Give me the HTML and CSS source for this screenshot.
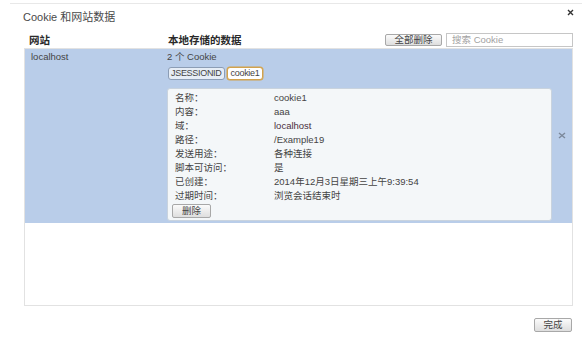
FILE: index.html
```html
<!DOCTYPE html>
<html lang="zh-CN">
<head>
    <meta charset="UTF-8">
    <meta name="viewport" content="width=device-width, initial-scale=1.0">
    <title>Cookie 和网站数据</title>
    <link rel="stylesheet" href="styles.css">
</head>
<body>
    <div class="dialog">
        <div class="title-row">
            <span class="title">Cookie 和网站数据</span>
            <span class="close">
                <svg width="7" height="7" viewBox="0 0 7 7"><path d="M1 1L6 6M6 1L1 6" stroke="#333" stroke-width="1.4"/></svg>
            </span>
        </div>
        <div class="toolbar">
            <div class="head-site">网站</div>
            <div class="head-data">本地存储的数据</div>
            <button class="btn btn-wide">全部删除</button>
            <input class="search" type="text" placeholder="搜索 Cookie">
        </div>
        <div class="list">
            <div class="row selected">
                <div class="site">localhost</div>
                <div class="data">
                    <div class="count">2 个 Cookie</div>
                    <div class="chips">
                        <span class="chip">JSESSIONID</span>
                        <span class="chip active">cookie1</span>
                    </div>
                    <div class="details">
                        <div class="field"><span class="label">名称：</span><span class="value">cookie1</span></div>
                        <div class="field"><span class="label">内容：</span><span class="value">aaa</span></div>
                        <div class="field"><span class="label">域：</span><span class="value domain">localhost</span></div>
                        <div class="field"><span class="label">路径：</span><span class="value">/Example19</span></div>
                        <div class="field"><span class="label">发送用途：</span><span class="value">各种连接</span></div>
                        <div class="field"><span class="label">脚本可访问：</span><span class="value">是</span></div>
                        <div class="field"><span class="label">已创建：</span><span class="value">2014年12月3日星期三上午9:39:54</span></div>
                        <div class="field"><span class="label">过期时间：</span><span class="value">浏览会话结束时</span></div>
                        <button class="btn btn-small">删除</button>
                    </div>
                </div>
                <div class="remove">
                    <svg width="8" height="7" viewBox="0 0 8 7"><path d="M1 1L7 6M7 1L1 6" stroke="#7b889a" stroke-width="1.4"/></svg>
                </div>
            </div>
        </div>
        <div class="footer">
            <button class="btn btn-done">完成</button>
        </div>
    </div>
</body>
</html>
```

FILE: styles.css
```css
/* Cookie dialog */
* {
    margin: 0;
    padding: 0;
    box-sizing: border-box;
}
body {
    background: #fff;
    font-family: "Liberation Sans", "Noto Sans CJK SC", sans-serif;
    font-size: 9.5px;
    color: #444;
}
.dialog {
    margin: 3px 0 0 10px;
    border-top: 1px solid #e8e8e8;
    padding: 0 9px 0 14px;
}
.title-row {
    height: 24px;
    display: flex;
    align-items: center;
    justify-content: space-between;
}
.title {
    font-size: 11px;
    color: #4a4a4a;
    margin-left: -1px;
}
.close {
    display: flex;
    margin-top: -8px;
    margin-right: -1px;
}
.toolbar {
    margin-top: 4px;
    height: 15px;
    display: flex;
    align-items: center;
    gap: 4px;
}
.head-site,
.head-data {
    font-size: 10.5px;
    font-weight: bold;
    color: #2a2a2a;
}
.head-site {
    width: 140px;
    padding-left: 5px;
}
.head-data {
    flex: 1;
}
.btn {
    height: 14px;
    background: linear-gradient(#fbfbfb, #dedede);
    border: 1px solid #a8a8a8;
    border-radius: 2px;
    font-family: "Liberation Sans", "Noto Sans CJK SC", sans-serif;
    font-size: 9.5px;
    color: #444;
    line-height: 12px;
}
.btn-wide {
    width: 57px;
    height: 12px;
    line-height: 10px;
}
.search {
    width: 127px;
    height: 14px;
    border: 1px solid #c6c6c6;
    padding: 0 5px;
    font-family: "Liberation Sans", "Noto Sans CJK SC", sans-serif;
    font-size: 9.5px;
    outline: none;
}
.search::placeholder {
    color: #a2a2a2;
}
.list {
    margin-top: 1px;
    height: 258px;
    border: 1px solid #e2e2e2;
}
.row {
    display: flex;
    padding: 1px 0 2px;
}
.row.selected {
    background: #b9cde9;
}
.site {
    width: 142px;
    padding-left: 6px;
    line-height: 14px;
}
.data {
    width: 385px;
}
.count {
    line-height: 14px;
}
.chips {
    margin-top: 3px;
    padding-left: 1px;
    display: flex;
    gap: 2px;
}
.chip {
    height: 13px;
    line-height: 11px;
    padding: 0 2px;
    font-size: 9px;
    letter-spacing: -0.3px;
    border: 1px solid #8c9db5;
    border-radius: 3px;
    background: #e6edf6;
}
.chip.active {
    background: #fff;
    border: 1px solid #d2a24c;
    box-shadow: 0 0 0 0.5px #d2a24c;
    padding: 0 3px;
}
.details {
    margin-top: 8px;
    border: 1px solid #c9d3de;
    border-radius: 3px;
    background: #f4f7f9;
    padding: 2px 6px 2px 7px;
}
.field {
    display: flex;
    line-height: 14px;
}
.label {
    width: 99px;
}
.value.domain {
    color: #4b2f3d;
}
.btn-small {
    margin: 1px 0 0 -3px;
    width: 39px;
}
.remove {
    flex: 1;
    display: flex;
    align-items: center;
    justify-content: center;
}
.footer {
    padding-top: 12px;
    display: flex;
    justify-content: flex-end;
}
.btn-done {
    width: 38px;
    margin-right: 1px;
}
```
